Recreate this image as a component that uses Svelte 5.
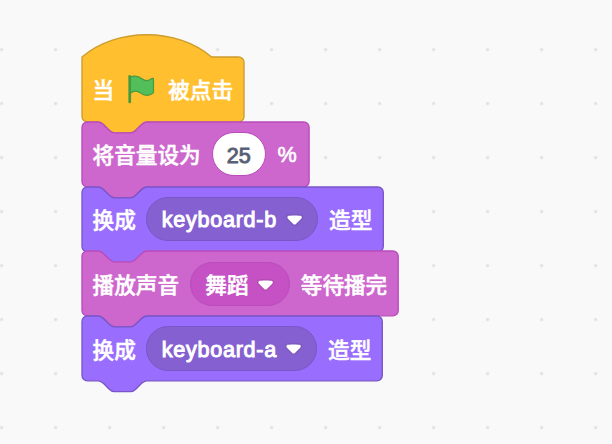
<script>
  const S = 1.35;
  const notchTop = 'H12c2 0 3 1 4 2l4 4c1 1 2 2 4 2h12c2 0 3-1 4-2l4-4c1-1 2-2 4-2';
  const tail = 'v40a4 4 0 0 1-4 4H48c-2 0-3 1-4 2l-4 4c-1 1-2 2-4 2h-12c-2 0-3-1-4-2l-4-4c-1-1-2-2-4-2H4a4 4 0 0 1-4-4z';

  const outline = (kind, width) => {
    const w = width / S;
    const head = kind === 'event' ? 'M0 0c25-22 71-22 96 0' : `M0 4A4 4 0 0 1 4 0${notchTop}`;
    return `${head}H${w - 4}a4 4 0 0 1 4 4${tail}`;
  };

  const blocks = [
    { kind: 'event', width: 162, parts: [{ label: '当' }, { flag: true }, { label: '被点击' }] },
    { kind: 'sound', width: 227.1, parts: [{ label: '将音量设为' }, { number: '25' }, { label: '%', latin: true }] },
    { kind: 'looks', width: 301.3, parts: [{ label: '换成' }, { menu: 'keyboard-b', width: 172, latin: true }, { label: '造型' }] },
    { kind: 'sound', width: 316.2, parts: [{ label: '播放声音' }, { menu: '舞蹈', width: 100 }, { label: '等待播完' }] },
    { kind: 'looks', width: 300.3, parts: [{ label: '换成' }, { menu: 'keyboard-a', width: 171, latin: true }, { label: '造型' }] }
  ];
</script>

<main class="workspace">
  <div class="stack">
    {#each blocks as block}
      <div class="block {block.kind}" style="width: {block.width}px">
        <svg class="shape" width={block.width} height="64.8" aria-hidden="true">
          <path d={outline(block.kind, block.width)} transform="scale({S})" />
        </svg>
        {#each block.parts as part}
          {#if part.flag}
            <svg class="flag" viewBox="0 0 24 24" aria-hidden="true">
              <path class="cloth" d="M3.8 3.1c2.8-1.3 6.2-.9 8.7 1.1 2.2 1.7 5.2 1.6 7.4-.1.6-.4 1.2-.1 1.2.5v9.7c0 .3-.1.4-.3.6-2.7 2.2-6.5 2.2-9.2 0-2.4-1.8-5.3-1.7-7.8.1z" />
              <path class="pole" d="M3.5 2.4v19" />
            </svg>
          {:else if part.number}
            <span class="number latin">{part.number}</span>
          {:else if part.menu}
            <span class="menu" style="width: {part.width}px">
              <span class="text" class:latin={part.latin} class:name={part.latin}>{part.menu}</span>
              <svg class="arrow" viewBox="0 0 12.71 8.79" aria-hidden="true">
                <path fill="#231f20" opacity=".1" d="M12.71 2.44A2.41 2.41 0 0 1 12 4.16L8.08 8.08a2.45 2.45 0 0 1-3.45 0L.72 4.16A2.42 2.42 0 0 1 0 2.44 2.48 2.48 0 0 1 .71.71C1 .47 1.43 0 6.36 0S11.75.46 12 .71a2.44 2.44 0 0 1 .71 1.73z" />
                <path fill="#fff" d="M6.36 7.79a1.43 1.43 0 0 1-1-.42L1.42 3.45a1.44 1.44 0 0 1 0-2c.56-.56 9.31-.56 9.87 0a1.44 1.44 0 0 1 0 2L7.37 7.37a1.43 1.43 0 0 1-1.01.42z" />
              </svg>
            </span>
          {:else}
            <span class="text" class:latin={part.latin} class:percent={part.label === '%'}>{part.label}</span>
          {/if}
        {/each}
      </div>
    {/each}
  </div>
</main>

<style>
  :global(body) {
    margin: 0;
    background: #f9f9f9;
  }
  .workspace {
    box-sizing: border-box;
    width: 612px;
    height: 444px;
    padding: 57.1px 0 0 81.8px;
    overflow: hidden;
    background: #f9f9f9 radial-gradient(circle at 27px 27px, #dcdcdc 1.2px, transparent 1.8px) -25.4px 22.6px / 54px 54px;
    color: #fff;
    font: 500 21.6px/32px 'Noto Sans CJK SC', sans-serif;
    white-space: nowrap;
    -webkit-text-stroke: 0.5px currentColor;
  }
  .stack {
    display: flex;
    flex-direction: column;
    align-items: flex-start;
  }
  .block {
    position: relative;
    box-sizing: border-box;
    display: flex;
    align-items: center;
    justify-content: space-between;
    height: 64.8px;
    padding: 0 10.8px;
  }
  .event { --fill: #ffbf2f; --edge: #cc9c2c; }
  .sound { --fill: #cd67cd; --edge: #b94bbb; --field: #c551c5; }
  .looks { --fill: #996dfd; --edge: #7956c8; --field: #8560d0; }
  .shape {
    position: absolute;
    inset: 0 auto auto 0;
    overflow: visible;
  }
  .shape path {
    fill: var(--fill);
    stroke: var(--edge);
    stroke-width: 1;
  }
  .text, .flag, .number, .menu {
    position: relative;
    flex: none;
  }
  .latin {
    font-family: 'Liberation Sans', sans-serif;
    font-weight: 400;
  }
  .name {
    padding-top: 2px;
    letter-spacing: 0.7px;
    -webkit-text-stroke-width: 1px;
  }
  .percent {
    margin-right: 1.4px;
    padding-top: 2px;
    -webkit-text-stroke-width: 0.6px;
  }
  .flag {
    width: 32.4px;
    height: 32.4px;
  }
  .cloth {
    fill: #52bf5b;
    stroke: #46993e;
    stroke-width: 0.9;
    stroke-linejoin: round;
  }
  .pole {
    fill: none;
    stroke: #46993e;
    stroke-width: 2;
    stroke-linecap: round;
  }
  .number {
    box-sizing: border-box;
    width: 54px;
    height: 44.4px;
    margin-right: 0.8px;
    padding-top: 1.6px;
    border: 1.35px solid var(--edge);
    border-radius: 22.2px;
    background: #fff;
    color: #575e75;
    line-height: 42px;
    text-align: center;
    -webkit-text-stroke-width: 0.9px;
  }
  .menu {
    box-sizing: border-box;
    display: flex;
    align-items: center;
    justify-content: space-between;
    height: 44.4px;
    padding: 0 14.5px 0 14.4px;
    border: 1.35px solid var(--edge);
    border-radius: 22.2px;
    background: var(--field);
  }
  .arrow {
    width: 17.16px;
    height: 11.87px;
    margin-top: 1.4px;
  }
</style>
